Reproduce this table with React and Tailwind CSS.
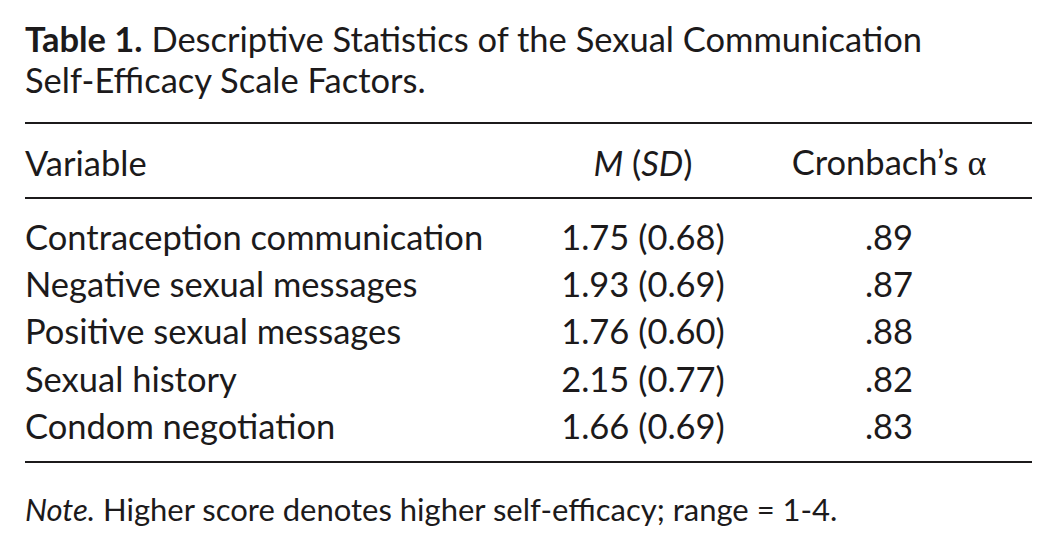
const ROWS = [
  ['Contraception communication', '1.75 (0.68)', '.89'],
  ['Negative sexual messages', '1.93 (0.69)', '.87'],
  ['Positive sexual messages', '1.76 (0.60)', '.88'],
  ['Sexual history', '2.15 (0.77)', '.82'],
  ['Condom negotiation', '1.66 (0.69)', '.83'],
]

export default function App() {
  return (
    <div className="w-[1057px] h-[549px] bg-white text-[#1c1a1b] font-['Lato','Open_Sans',sans-serif] pl-[25px] pt-[18px]">
      <div className="w-[1007px]">
        <p className="text-[34.5px] leading-[41px] whitespace-nowrap">
          <span className="font-bold">Table 1.</span> Descriptive Statistics of the Sexual Communication
          <br />
          Self-Efficacy Scale Factors.
        </p>
        <div className="mt-[22px] border-t-2 border-[#1c1a1b]" />
        <div className="flex items-end h-[75px] pb-[14px] text-[34.5px] leading-[40px] border-b-2 border-[#1c1a1b]">
          <div className="w-[515px]">Variable</div>
          <div className="w-[206px] text-center"><i>M</i> (<i>SD</i>)</div>
          <div className="flex-1 text-center">
            Cronbach’s <span className="font-['Liberation_Serif',serif] text-[36px]">α</span>
          </div>
        </div>
        <div className="pt-[14px] pb-[12px] border-b-2 border-[#1c1a1b]">
          {ROWS.map(r => (
            <div key={r[0]} className="flex h-[47.3px] items-center text-[34.5px] leading-[40px]">
              <div className="w-[515px]">{r[0]}</div>
              <div className="w-[206px] text-center">{r[1]}</div>
              <div className="flex-1 text-center">{r[2]}</div>
            </div>
          ))}
        </div>
        <p className="mt-[26px] text-[31px] leading-[40px]">
          <i>Note.</i> Higher score denotes higher self-efficacy; range = 1-4.
        </p>
      </div>
    </div>
  )
}
